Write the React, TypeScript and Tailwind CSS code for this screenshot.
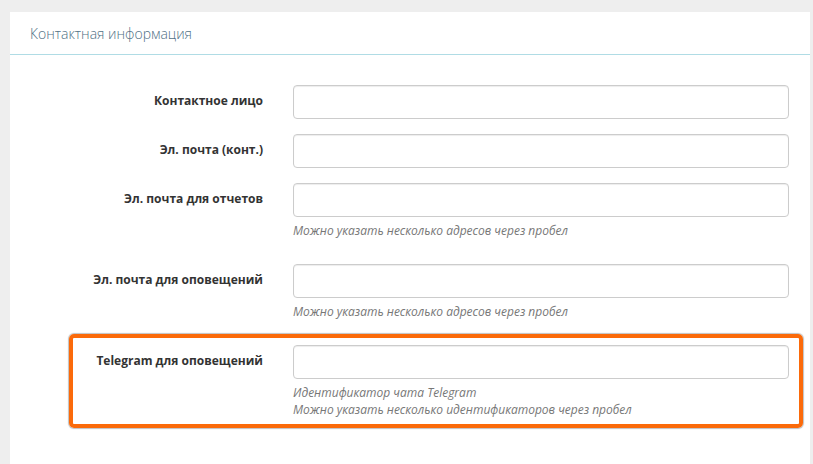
import React from "react";

const font = { fontFamily: '"Open Sans", "Noto Sans", "Liberation Sans", sans-serif' };

function Field({ label, help }: { label: string; help?: string[] }) {
  return (
    <div className="flex mb-[15px]">
      <div className="w-[268px] pr-[15px] pt-[7px] text-right text-[12px] leading-[18.5px] font-bold text-[#333333]">
        {label}
      </div>
      <div className="flex-1 pl-[15px] pr-[21px]">
        <input
          type="text"
          className="block w-full h-[34px] rounded-[4px] border border-[#cccccc] bg-white px-3 text-[13px] shadow-[inset_0_1px_1px_rgba(0,0,0,0.075)] outline-none"
        />
        {help && (
          <div className="mt-[5px] mb-[10px] text-[12px] leading-[17px] italic text-[#777777]">
            {help.map((h) => (
              <div key={h}>{h}</div>
            ))}
          </div>
        )}
      </div>
    </div>
  );
}

export default function App() {
  return (
    <div className="relative min-h-[464px] w-[813px] bg-[#eeeeee] pt-[12px] pl-[10px] pr-[3px]" style={font}>
      <div className="min-h-[452px] w-[800px] bg-white">
        <div className="h-[43px] border-b border-[#b0dce5] pl-[20px] flex items-center">
          <span className="text-[14px] font-light text-[#4f7085]">Контактная информация</span>
        </div>
        <div className="pt-[30px]">
          <Field label="Контактное лицо" />
          <Field label="Эл. почта (конт.)" />
          <Field label="Эл. почта для отчетов" help={["Можно указать несколько адресов через пробел"]} />
          <Field label="Эл. почта для оповещений" help={["Можно указать несколько адресов через пробел"]} />
          <Field
            label="Telegram для оповещений"
            help={["Идентификатор чата Telegram", "Можно указать несколько идентификаторов через пробел"]}
          />
        </div>
      </div>
      <div className="absolute left-[69px] top-[334px] w-[734px] h-[94px] rounded-[5px] border-[4px] border-[#fb6a0a] shadow-[0_0_1px_1px_rgba(0,0,0,0.25)] pointer-events-none" />
    </div>
  );
}
